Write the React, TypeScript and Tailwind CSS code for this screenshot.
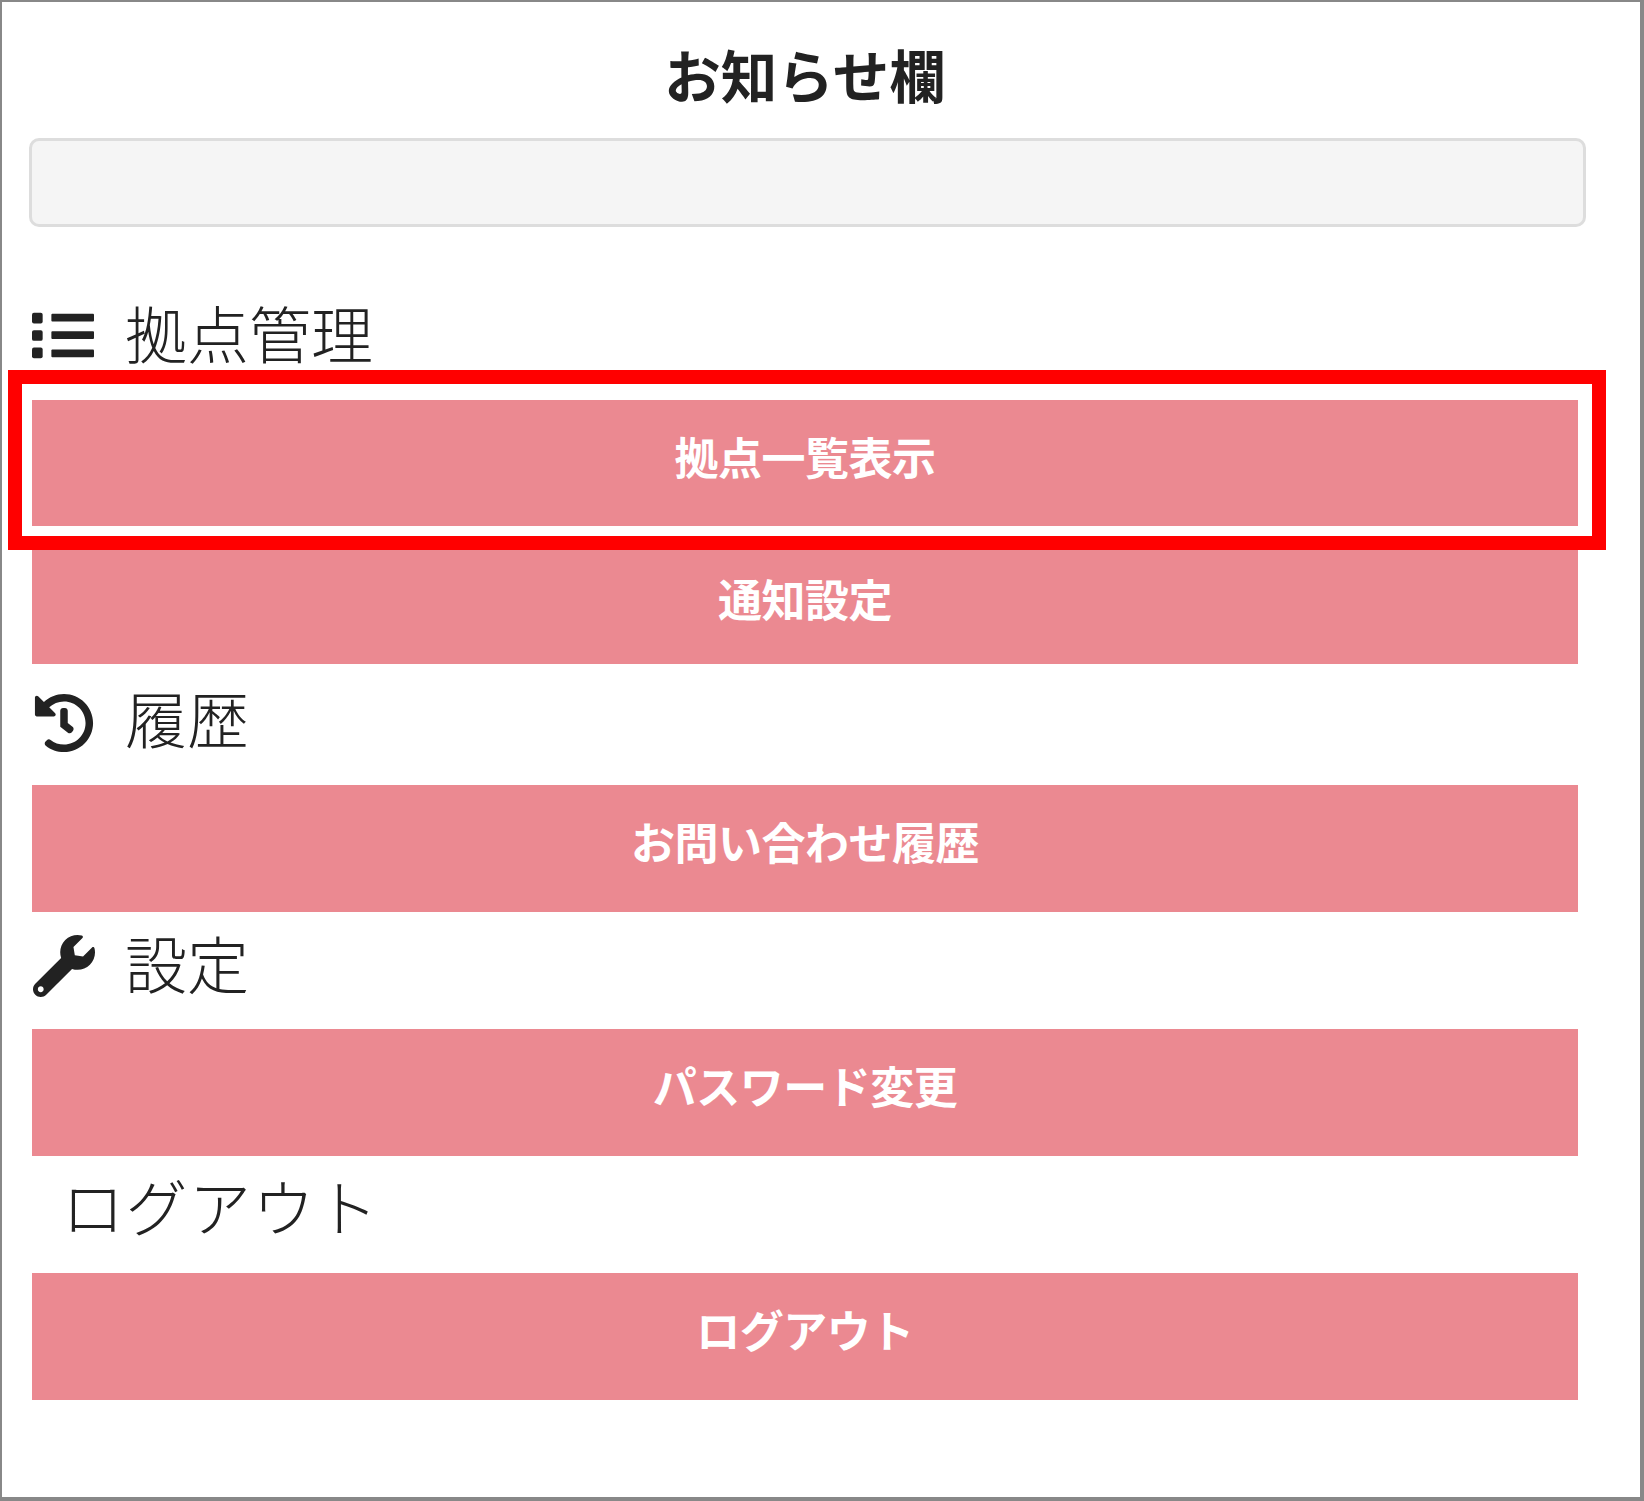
import React from 'react';
import { FaHistory, FaWrench } from 'react-icons/fa';

const font = { fontFamily: '"Noto Sans CJK JP", "Noto Sans", sans-serif' };

function ListIcon() {
    return (
        <svg viewBox="0 0 64 50" className="w-[62px] h-[50px] fill-[#222222]">
            <rect x="0" y="2" width="11" height="11" rx="2" />
            <rect x="0" y="20" width="11" height="11" rx="2" />
            <rect x="0" y="38" width="11" height="11" rx="2" />
            <rect x="20" y="3" width="44" height="8" rx="1" />
            <rect x="20" y="21" width="44" height="8" rx="1" />
            <rect x="20" y="40" width="44" height="8" rx="1" />
        </svg>
    );
}

function MenuButton({ label, className = 'h-[127px] pb-[16px]' }: { label: string; className?: string }) {
    return (
        <div className={`ml-[2px] mr-[6px] bg-[#eb8991] flex items-center justify-center text-[44px] leading-none font-bold text-white tracking-[-0.5px] ${className}`}>
            {label}
        </div>
    );
}

function SectionHeading({ icon, label, className = '' }: { icon?: React.ReactNode; label: string; className?: string }) {
    return (
        <div className={`flex items-center text-[62px] leading-none font-light text-[#222222] ${className}`}>
            {icon && <span className="w-[95px] shrink-0">{icon}</span>}
            <span>{label}</span>
        </div>
    );
}

export default function App() {
    return (
        <div style={font} className="relative w-[1644px] h-[1501px] bg-white border-2 border-b-4 border-r-4 border-[#888888] pl-[28px] pr-[56px] pt-[43px]">
            <h1 className="text-center text-[56.5px] leading-none font-bold text-[#222222] h-[93px] pr-[4px]">お知らせ欄</h1>

            <div className="h-[89px] -mr-[2px] -ml-px bg-[#f5f5f5] border-[3px] border-[#dddddd] rounded-[10px]"></div>

            <SectionHeading icon={<span className="block ml-[2px] mt-[7px]"><ListIcon /></span>} label="拠点管理" className="h-[71px] mt-[69px] mb-[33px]" />
            <MenuButton label="拠点一覧表示" className="h-[126px] pb-[15px] mb-[12px]" />
            <MenuButton label="通知設定" className="h-[126px] pb-[7px]" />

            <SectionHeading icon={<FaHistory className="ml-[4px] mt-[12px] w-[60px] h-[60px]" />} label="履歴" className="h-[121px] pb-[15px]" />
            <MenuButton label="お問い合わせ履歴" />

            <SectionHeading icon={<FaWrench className="ml-[3px] mt-[8px] w-[62px] h-[62px]" />} label="設定" className="h-[117px] pb-[17px]" />
            <MenuButton label="パスワード変更" />

            <SectionHeading label="ログアウト" className="h-[117px] pb-[19px] pl-[32px] tracking-[1.5px]" />
            <MenuButton label="ログアウト" />

            {/* red highlight over the first button */}
            <div className="absolute left-[6px] top-[368px] w-[1598px] h-[180px] border-[14px] border-[#ff0000]"></div>
        </div>
    );
}
